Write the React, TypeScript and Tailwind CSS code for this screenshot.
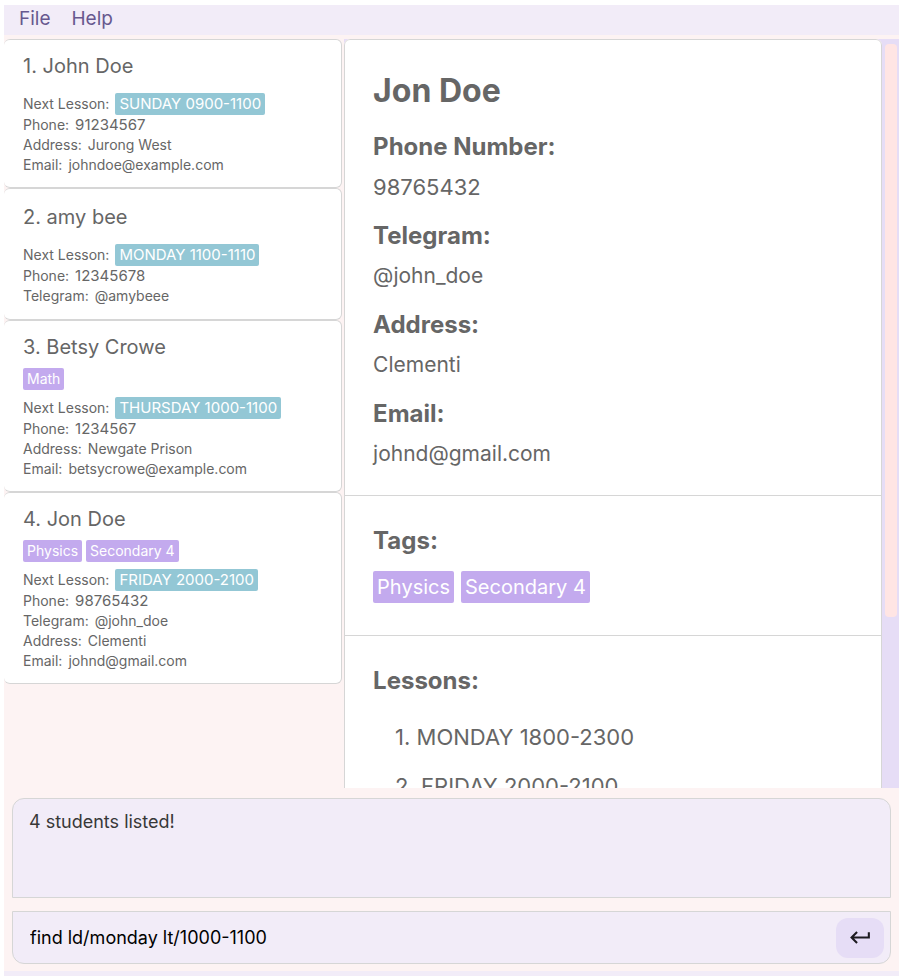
import { MdKeyboardReturn } from "react-icons/md";

type Student = {
  name: string;
  phone: string;
  tags: string[];
  lesson: string;
  details: [string, string][];
};

const students: Student[] = [
  {
    name: "John Doe",
    phone: "91234567",
    tags: [],
    lesson: "SUNDAY 0900-1100",
    details: [
      ["Address", "Jurong West"],
      ["Email", "johndoe@example.com"],
    ],
  },
  {
    name: "amy bee",
    phone: "12345678",
    tags: [],
    lesson: "MONDAY 1100-1110",
    details: [["Telegram", "@amybeee"]],
  },
  {
    name: "Betsy Crowe",
    phone: "1234567",
    tags: ["Math"],
    lesson: "THURSDAY 1000-1100",
    details: [
      ["Address", "Newgate Prison"],
      ["Email", "betsycrowe@example.com"],
    ],
  },
  {
    name: "Jon Doe",
    phone: "98765432",
    tags: ["Physics", "Secondary 4"],
    lesson: "FRIDAY 2000-2100",
    details: [
      ["Telegram", "@john_doe"],
      ["Address", "Clementi"],
      ["Email", "johnd@gmail.com"],
    ],
  },
];

const contacts: [string, string][] = [
  ["Telegram", "@john_doe"],
  ["Address", "Clementi"],
  ["Email", "johnd@gmail.com"],
];

function StudentCard({ student, index }: { student: Student; index: number }) {
  return (
    <li className="flex min-h-[132px] flex-col justify-center rounded-md border border-l-0 border-[#d6d6d6] bg-white py-3 pl-[19px] text-sm leading-5">
      <h2 className="text-xl leading-7">
        {index}. {student.name}
      </h2>
      {student.tags.length > 0 && (
        <ul className="mt-[7px] -mb-[6px] flex gap-1">
          {student.tags.map((tag) => (
            <li key={tag} className="rounded-xs bg-[#c3aaee] px-1 leading-[22px] text-white">
              {tag}
            </li>
          ))}
        </ul>
      )}
      <dl className="mt-[13px]">
        <div className="flex items-center gap-[6px] leading-[22px]">
          <dt>Next Lesson:</dt>
          <dd className="rounded-xs bg-[#93c7d5] px-1 text-[15px] text-white">{student.lesson}</dd>
        </div>
        <div className="flex gap-[6px]">
          <dt>Phone:</dt>
          <dd className="text-[15px]">{student.phone}</dd>
        </div>
        {student.details.map(([label, value]) => (
          <div key={label} className="flex gap-[6px]">
            <dt>{label}:</dt>
            <dd>{value}</dd>
          </div>
        ))}
      </dl>
    </li>
  );
}

export default function App() {
  return (
    <div className="flex h-screen flex-col bg-white pt-[5px] pr-[3px] pl-1 font-['Inter','Liberation_Sans',sans-serif] text-[#666666]">
      <div className="flex min-h-0 flex-1 flex-col bg-[#fdf3f3]">
        <nav className="flex h-[30px] shrink-0 items-center gap-[21px] bg-[#f2ecf8] px-[15px] pb-[3px] text-[19px] leading-6 text-[#67588f]">
          <button type="button">File</button>
          <button type="button">Help</button>
        </nav>

        <main className="mt-1 flex min-h-0 flex-1">
          <ul className="w-[38%] shrink-0 overflow-hidden pr-[2px]">
            {students.map((student, i) => (
              <StudentCard key={student.name} student={student} index={i + 1} />
            ))}
          </ul>

          <div className="flex min-w-0 flex-1 bg-[#e6ddf6]">
            <section className="min-w-0 flex-1 overflow-hidden rounded-t-md bg-[#fdf3f3] text-[21px] leading-10">
              <div className="min-h-full rounded-t-md border border-[#d6d6d6] bg-white">
                <div className="px-7 pt-[31px] pb-[21px]">
                  <h1 className="mb-4 text-[32px] leading-10 font-bold">Jon Doe</h1>
                  <dl className="flex flex-col gap-[9px]">
                    <div>
                      <dt className="text-2xl leading-10 font-bold">Phone Number:</dt>
                      <dd className="text-[22px]">98765432</dd>
                    </div>
                    {contacts.map(([label, value]) => (
                      <div key={label}>
                        <dt className="text-2xl leading-10 font-bold">{label}:</dt>
                        <dd>{value}</dd>
                      </div>
                    ))}
                  </dl>
                </div>
                <div className="border-t border-[#d6d6d6] px-7 pt-[25px] pb-8">
                  <h2 className="text-2xl leading-10 font-bold">Tags:</h2>
                  <ul className="mt-[10px] flex gap-[7px] text-xl text-white">
                    <li className="rounded-xs bg-[#c3aaee] px-1 leading-8">Physics</li>
                    <li className="rounded-xs bg-[#c3aaee] px-1 leading-8">Secondary 4</li>
                  </ul>
                </div>
                <div className="border-t border-[#d6d6d6] px-7 pt-[25px] pb-8">
                  <h2 className="text-2xl leading-10 font-bold">Lessons:</h2>
                  <ol className="mt-4 flex flex-col gap-[9px] pl-[22px] text-[22px]">
                    <li>1. MONDAY 1800-2300</li>
                    <li>2. FRIDAY 2000-2100</li>
                  </ol>
                </div>
              </div>
            </section>
            <div className="w-[17px] shrink-0 px-[3px] pt-[5px]">
              <div className="h-[77%] w-3 rounded-sm bg-[#ffe5e4]" />
            </div>
          </div>
        </main>

        <output className="mx-2 mt-[10px] block h-[100px] shrink-0 rounded-t-xl border border-[#d6d6d6] bg-[#f2ecf8] px-4 py-[11px] text-lg leading-6 text-[#383838]">
          4 students listed!
        </output>

        <form
          className="mx-2 mt-[13px] mb-[7px] flex h-[53px] shrink-0 items-center rounded-b-xl border border-[#d6d6d6] bg-[#f2ecf8] pr-[6px] pl-[17px]"
          onSubmit={(e) => e.preventDefault()}
        >
          <input
            aria-label="Command"
            defaultValue="find ld/monday lt/1000-1100"
            className="min-w-0 flex-1 bg-transparent text-lg leading-6 text-black outline-none"
          />
          <button
            type="submit"
            aria-label="Run command"
            className="flex h-10 w-12 items-center justify-center rounded-xl bg-[#e6ddf6] text-[#1d1b20]"
          >
            <MdKeyboardReturn size={25} />
          </button>
        </form>
        <footer className="h-[5px] shrink-0 bg-[#f2ecf8]" />
      </div>
    </div>
  );
}
